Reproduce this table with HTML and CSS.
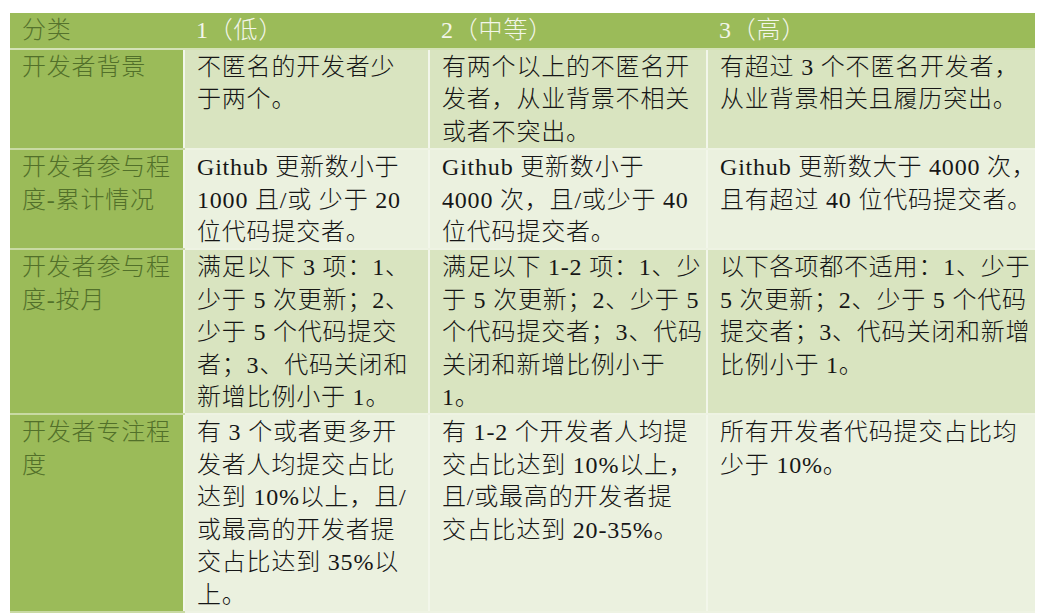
FILE: index.html
```html
<!DOCTYPE html>
<html lang="zh-CN">
<head>
<meta charset="utf-8">
<title>开发者评分表</title>
<link rel="stylesheet" href="styles.css">
</head>
<body>
<div class="page">
  <table class="matrix">
    <colgroup>
      <col class="c-cat">
      <col class="c-low">
      <col class="c-mid">
      <col class="c-high">
    </colgroup>
    <thead>
      <tr>
        <th class="head-cat">分类</th>
        <th>1（低）</th>
        <th>2（中等）</th>
        <th>3（高）</th>
      </tr>
    </thead>
    <tbody>
      <tr class="band-a">
        <th class="row-cat">开发者背景</th>
        <td>不匿名的开发者少<br>于两个。</td>
        <td>有两个以上的不匿名开<br>发者，从业背景不相关<br>或者不突出。</td>
        <td>有超过 3 个不匿名开发者，<br>从业背景相关且履历突出。</td>
      </tr>
      <tr class="band-b">
        <th class="row-cat">开发者参与程<br>度-累计情况</th>
        <td>Github 更新数小于<br>1000 且/或 少于 20<br>位代码提交者。</td>
        <td>Github 更新数小于<br>4000 次，且/或少于 40<br>位代码提交者。</td>
        <td>Github 更新数大于 4000 次，<br>且有超过 40 位代码提交者。</td>
      </tr>
      <tr class="band-a">
        <th class="row-cat">开发者参与程<br>度-按月</th>
        <td>满足以下 3 项：1、<br>少于 5 次更新；2、<br>少于 5 个代码提交<br>者；3、代码关闭和<br>新增比例小于 1。</td>
        <td>满足以下 1-2 项：1、少<br>于 5 次更新；2、少于 5<br>个代码提交者；3、代码<br>关闭和新增比例小于<br>1。</td>
        <td>以下各项都不适用：1、少于<br>5 次更新；2、少于 5 个代码<br>提交者；3、代码关闭和新增<br>比例小于 1。</td>
      </tr>
      <tr class="band-b">
        <th class="row-cat">开发者专注程<br>度</th>
        <td>有 3 个或者更多开<br>发者人均提交占比<br>达到 10%以上，且/<br>或最高的开发者提<br>交占比达到 35%以<br>上。</td>
        <td>有 1-2 个开发者人均提<br>交占比达到 10%以上，<br>且/或最高的开发者提<br>交占比达到 20-35%。</td>
        <td>所有开发者代码提交占比均<br>少于 10%。</td>
      </tr>
    </tbody>
  </table>
</div>
</body>
</html>
```

FILE: styles.css
```css
html, body {
  margin: 0;
  padding: 0;
  background: #ffffff;
}

.page {
  padding: 13px 0 0 10px;
}

.matrix {
  border-collapse: collapse;
  table-layout: fixed;
  width: 1025px;
  font-family: "Liberation Serif", "Noto Sans CJK SC", serif;
  font-size: 24px;
  letter-spacing: 0.8px;
  font-weight: 300;
  color: #161616;
}

.c-cat { width: 174px; }
.c-low { width: 245px; }
.c-mid { width: 278px; }
.c-high { width: 328px; }

.matrix th,
.matrix td {
  text-align: left;
  vertical-align: top;
  font-weight: 300;
  white-space: nowrap;
}

.matrix thead th {
  background: #9bbb59;
  color: #f3f6ea;
  height: 34px;
  padding: 1px 12px 0;
  line-height: 32px;
  border-bottom: 2px solid #d4e2b6;
}

.matrix thead th.head-cat {
  color: #55722d;
}

.matrix tbody th,
.matrix tbody td {
  padding: 1px 8px 0 12px;
  line-height: 32.4px;
  border-bottom: 2px solid #eef3e3;
}

.matrix tbody td {
  border-left: 2px solid #f2f6ea;
}

.matrix tbody th.row-cat {
  background: #9bbb59;
  color: #52702a;
  border-bottom-color: #c9daa3;
}

.band-a td {
  background: #d9e4c0;
}

.band-b td {
  background: #ebf1df;
}
```
